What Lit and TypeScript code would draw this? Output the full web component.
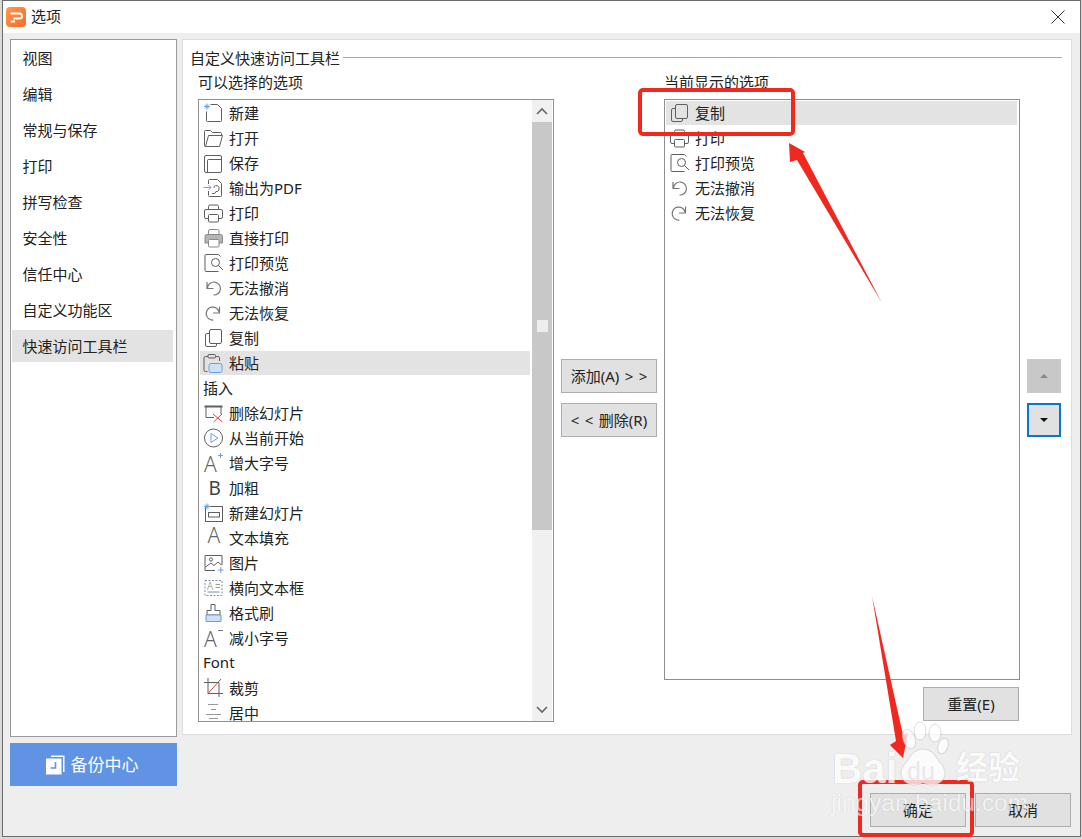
import { LitElement, html, svg, css } from "lit";
import { customElement } from "lit/decorators.js";

// 20x20 toolbar glyphs, traced from the dialog
const icons: Record<string, unknown> = {
  new: svg`<path d="M7.5 1.5H14.5L18.5 5.5V17.5Q18.5 18.5 17.5 18.5H4.5Q3.5 18.5 3.5 17.5V8.5"/><path class="b" d="M4 .5V6.5M1 3.5H7M2 1.5L6 5.5M6 1.5L2 5.5"/>`,
  open: svg`<path d="M2.5 18.5Q1.5 18.5 1.5 17.5V3.5Q1.5 2.5 2.5 2.5H7.5L9.5 4.5H17.5Q18.5 4.5 18.5 5.5V7.5"/><path d="M2.5 18.5H16.5L19.5 7.5H5.5L2.5 18.5Z"/>`,
  save: svg`<rect x="1.5" y="2.5" width="17" height="17" rx="1.5"/><path d="M4.5 19V7.5Q4.5 6.5 5.5 6.5H18"/>`,
  pdf: svg`<path d="M5.5 6V2.5Q5.5 1.5 6.5 1.5H14.5L18.5 5.5V17.5Q18.5 18.5 17.5 18.5H6.5Q5.5 18.5 5.5 17.5V13"/><path d="M9 15.5H11Q12.5 15.5 13 13.5H14.5Q16.5 12.5 16 9.5Q15 7 12.5 7.5Q11 8 11 10"/><path class="b" d="M.5 9.5H8M5.5 7L8 9.5L5.5 12"/>`,
  print: svg`<path d="M5.5 6.5V3.5Q5.5 2 7 2H14Q15.5 2 15.5 3.5V6.5"/><path d="M5.5 15.5H3Q1.5 15.5 1.5 14V8Q1.5 6.5 3 6.5H18Q19.5 6.5 19.5 8V14Q19.5 15.5 18 15.5H15.5"/><rect x="5.5" y="11.5" width="10" height="7.5" rx="1"/>`,
  direct: svg`<g stroke="#8a8a8a"><path d="M5.5 6.5V3Q5.5 1.5 7 1.5H14.5Q16 1.5 16 3V6.5"/><path d="M2 8.5Q2 6.5 4 6.5H17.5Q19.5 6.5 19.5 8.5V15H2Z" fill="#b5b5b5"/><rect x="5.5" y="11.5" width="10.5" height="7.5" rx="1" fill="#fff"/></g>`,
  preview: svg`<path d="M15.5 18.5H3Q2 18.5 2 17.5V2.5Q2 1.5 3 1.5H15.5L17.5 3.5"/><circle cx="12.5" cy="9.5" r="4"/><path d="M15.5 12.5L20 17"/>`,
  undo: svg`<path class="u" d="M4 4V10.5H10.5M4.5 10A6.5 6.5 0 1 1 10.5 17"/>`,
  redo: svg`<path class="u" d="M16.5 3.5V10H10M16 9A6.5 6.5 0 1 0 10.5 17"/>`,
  copy: svg`<rect x="6.5" y="1.5" width="12" height="14" rx="1.5"/><path d="M6.5 5.5H4Q2.5 5.5 2.5 7V17Q2.5 18.5 4 18.5H12Q13.5 18.5 13.5 17V15.5"/>`,
  paste: svg`<path d="M4.5 18.5H2.5Q1 18.5 1 17V5Q1 3.5 2.5 3.5H15Q16.5 3.5 16.5 5V8"/><rect x="5" y="1.5" width="7.5" height="3.5" rx="1" fill="#ddd"/><rect class="b" fill="#cfe0f5" x="6" y="10.5" width="13" height="9" rx="2"/>`,
  delslide: svg`<path d="M1.5 3.5H19.5" stroke-width="2"/><path d="M3 3.5V14.5H11"/><path d="M12 3.5H18V11"/><path stroke="#e0403a" d="M10 11L19.5 19M19 11L10.5 19"/>`,
  play: svg`<circle cx="10.5" cy="10" r="9"/><path class="b" d="M8 5.5V14.5L15 10Z"/>`,
  grow: svg`<text x="1" y="19" class="gl">A</text><path class="b" d="M15 2.5H20M17.5 0V5"/>`,
  bold: svg`<text x="5.5" y="16.5" class="gl bd">B</text>`,
  newslide: svg`<rect x="2.5" y="3.5" width="17" height="15"/><rect x="5.5" y="9.5" width="11" height="4.5"/><path class="b" d="M4 .5V6.5M1 3.5H7M2 1.5L6 5.5M6 1.5L2 5.5"/>`,
  fill: svg`<text x="4.5" y="15" class="gl">A</text>`,
  picture: svg`<path d="M12 17.5H2V2.5H19V12"/><circle cx="8" cy="6.5" r="1.6"/><path d="M2.5 14L8 10L11 12.5L15 9L18.5 12"/><path class="b" d="M15 17H20.5M17.8 14.2V20"/>`,
  textbox: svg`<rect x="2" y="2.5" width="17" height="15" stroke-dasharray="2 1.5" stroke="#7a8ea8"/><text x="4" y="12" class="gl sm">A</text><path stroke="#999" d="M12.5 6.5H17M12.5 9.5H17"/><path stroke="#7a8ea8" d="M4.5 14H16.5"/>`,
  brush: svg`<path d="M8 1.5H12V7.5H17V12H4V7.5H8Z"/><path class="b" fill="#cfe0f5" d="M3 12H18V18.5H3Z"/>`,
  shrink: svg`<text x="1" y="19" class="gl">A</text><path stroke="#777" d="M15 2.5H20"/>`,
  crop: svg`<path d="M5 0V15.5H20M1 4.5H16V19"/><path stroke="#e0403a" d="M5 15.5L18 1"/>`,
  center: svg`<path stroke="#999" d="M5 1.5H15M8 6.5H13M3 11.5H18M6 15.5H15"/><path stroke="#888" stroke-width="1.5" d="M2 19H19"/>`,
};

type Row = { label: string; icon?: string; selected?: boolean };

const available: Row[] = [
  { label: "新建", icon: "new" },
  { label: "打开", icon: "open" },
  { label: "保存", icon: "save" },
  { label: "输出为PDF", icon: "pdf" },
  { label: "打印", icon: "print" },
  { label: "直接打印", icon: "direct" },
  { label: "打印预览", icon: "preview" },
  { label: "无法撤消", icon: "undo" },
  { label: "无法恢复", icon: "redo" },
  { label: "复制", icon: "copy" },
  { label: "粘贴", icon: "paste", selected: true },
  { label: "插入" },
  { label: "删除幻灯片", icon: "delslide" },
  { label: "从当前开始", icon: "play" },
  { label: "增大字号", icon: "grow" },
  { label: "加粗", icon: "bold" },
  { label: "新建幻灯片", icon: "newslide" },
  { label: "文本填充", icon: "fill" },
  { label: "图片", icon: "picture" },
  { label: "横向文本框", icon: "textbox" },
  { label: "格式刷", icon: "brush" },
  { label: "减小字号", icon: "shrink" },
  { label: "Font" },
  { label: "裁剪", icon: "crop" },
  { label: "居中", icon: "center" },
];

const current: Row[] = [
  { label: "复制", icon: "copy", selected: true },
  { label: "打印", icon: "print" },
  { label: "打印预览", icon: "preview" },
  { label: "无法撤消", icon: "undo" },
  { label: "无法恢复", icon: "redo" },
];

const navItems = ["视图", "编辑", "常规与保存", "打印", "拼写检查", "安全性", "信任中心", "自定义功能区", "快速访问工具栏"];

@customElement("app-root")
export class AppRoot extends LitElement {
  static styles = css`
    :host {
      display: block;
      width: 1082px;
      height: 839px;
      position: relative;
      overflow: hidden;
      background: #d9d9d9;
      font-family: "Noto Sans", "Noto Sans CJK SC", sans-serif;
      font-size: 15px;
      color: #222;
      box-sizing: border-box;
      padding: 0 1px 2px 2px;
    }
    * {
      box-sizing: border-box;
    }
    .window {
      height: 100%;
      border: 1px solid #6b6b6b;
      display: flex;
      flex-direction: column;
      background: #eeeeee;
    }
    .titlebar {
      height: 32px;
      background: #fff;
      display: flex;
      align-items: center;
      padding: 0 14px 0 3px;
      gap: 5px;
      flex: none;
    }
    .logo {
      width: 20px;
      height: 20px;
      display: block;
    }
    .title {
      flex: 1;
      padding-bottom: 3px;
    }
    .close {
      width: 16px;
      height: 16px;
      display: block;
    }
    .body {
      flex: 1;
      display: flex;
      gap: 5px;
      padding: 6px 6px 0 7px;
    }
    .side {
      width: 167px;
      display: flex;
      flex-direction: column;
      gap: 6px;
    }
    .nav {
      height: 698px;
      border: 1px solid #9a9a9a;
      background: #fff;
      padding: 2px 3px 0 1px;
      display: flex;
      flex-direction: column;
      gap: 4px;
    }
    .nav-item {
      height: 32px;
      line-height: 32px;
      padding-left: 10.5px;
    }
    .nav-item.on {
      background: #e3e3e3;
    }
    .backup {
      height: 43px;
      background: #6193e4;
      color: #fff;
      font-size: 17px;
      display: flex;
      align-items: center;
      justify-content: center;
      gap: 6px;
      padding-right: 4px;
    }
    .backup span {
      padding-bottom: 3px;
    }
    .backup svg {
      width: 20px;
      height: 20px;
      display: block;
    }
    .main {
      width: 890px;
      display: flex;
      flex-direction: column;
    }
    .panel {
      height: 696px;
      background: #fff;
      border: 1px solid #dcdcdc;
      padding: 8px 9px 0 7px;
    }
    .heading {
      height: 20px;
      line-height: 18px;
      display: flex;
      align-items: center;
      gap: 3px;
    }
    .heading i {
      flex: 1;
      border-top: 1px solid #a8a8a8;
      margin-top: -1px;
    }
    .columns {
      display: flex;
      gap: 7px;
      padding: 5px 0 0 8px;
    }
    .col {
      width: 356px;
      display: flex;
      flex-direction: column;
    }
    .col.right {
      align-items: flex-end;
    }
    .col-label {
      height: 20px;
      line-height: 18px;
      margin-bottom: 6px;
      align-self: flex-start;
    }
    .list {
      border: 1px solid #8f8f8f;
      background: #fff;
      display: flex;
      overflow: hidden;
      width: 100%;
    }
    .list.long {
      height: 623px;
    }
    .list.short {
      height: 581px;
    }
    .rows {
      flex: 1;
      padding: 1px 2px 0 1px;
      display: flex;
      flex-direction: column;
      gap: 1px;
      min-width: 0;
    }
    .row {
      height: 24px;
      flex: none;
      display: flex;
      align-items: center;
      gap: 6px;
      padding-left: 3px;
      white-space: nowrap;
    }
    .row span {
      padding-bottom: 2px;
    }
    .row.on {
      background: #e3e3e3;
    }
    .row svg {
      width: 20px;
      height: 20px;
      flex: none;
      fill: none;
      stroke: #5f5f5f;
      stroke-width: 1;
      overflow: visible;
    }
    .row svg .b {
      stroke: #6f9fd8;
    }
    .row svg .u {
      stroke: #777;
      stroke-width: 1.2;
    }
    .row svg .gl {
      font: 300 21px "Noto Sans", sans-serif;
      fill: #666;
      stroke: none;
    }
    .row svg .gl.bd {
      font: 400 19px "Noto Sans", sans-serif;
      fill: #444;
    }
    .row svg .gl.sm {
      font-size: 10px;
      fill: #777;
    }
    .scrollbar {
      width: 20px;
      margin-right: 1px;
      background: #f0f0f0;
      display: flex;
      flex-direction: column;
      flex: none;
    }
    .sb-end {
      height: 22px;
      flex: none;
      display: flex;
      align-items: center;
      justify-content: center;
    }
    .sb-end svg {
      width: 12px;
      height: 8px;
      fill: none;
      stroke: #666;
      stroke-width: 1.6;
    }
    .thumb {
      height: 408px;
      flex: none;
      background: #c8c8c8;
      display: flex;
      justify-content: center;
      padding-top: 198px;
    }
    .thumb i {
      width: 11px;
      height: 12px;
      background: #eeeeee;
    }
    .track {
      flex: 1;
    }
    button {
      font: inherit;
      color: #222;
      width: 96px;
      height: 34px;
      background: #e1e1e1;
      border: 1px solid #adadad;
      padding: 0 0 2px;
      white-space: pre;
      word-spacing: 1.5px;
    }
    .middle {
      width: 96px;
      display: flex;
      flex-direction: column;
      gap: 10px;
      padding-top: 286px;
    }
    .updown {
      width: 34px;
      display: flex;
      flex-direction: column;
      gap: 10px;
      padding-top: 286px;
    }
    .updown button {
      width: 34px;
      padding: 0;
      display: flex;
      align-items: center;
      justify-content: center;
    }
    .updown button.off {
      background: #c8c8c8;
      border-color: #c8c8c8;
    }
    .updown button.focus {
      border: 2px solid #0a78c8;
    }
    .tri {
      width: 8px;
      height: 4px;
      display: block;
    }
    .reset {
      margin-top: 7px;
      margin-right: 1px;
    }
    .footer {
      display: flex;
      justify-content: flex-end;
      gap: 9px;
      padding: 58px 1px 0 0;
    }
    .mark-box {
      position: absolute;
      border: 4px solid #f0281e;
      border-radius: 5px;
    }
    .mark-copy {
      left: 638px;
      top: 88px;
      width: 157px;
      height: 48px;
    }
    .mark-ok {
      left: 858px;
      top: 780px;
      width: 116px;
      height: 57px;
    }
    .overlay {
      position: absolute;
      left: 0;
      top: 0;
      width: 1082px;
      height: 839px;
      pointer-events: none;
    }
    .wm {
      position: absolute;
      color: #fff;
      opacity: 0.75;
      text-shadow: 0 0 1px #aaa;
      font-family: "Liberation Sans", "Noto Sans CJK SC", sans-serif;
      white-space: nowrap;
      line-height: 1;
    }
    .wm-bai {
      left: 832px;
      top: 748px;
      font-size: 42px;
      font-weight: 700;
    }
    .wm-du {
      left: 907px;
      top: 759px;
      font-size: 25px;
      color: #e4e4e4;
      text-shadow: none;
    }
    .wm-jy {
      left: 956px;
      top: 752px;
      font-size: 32px;
      font-weight: 700;
    }
    .wm-url {
      left: 831px;
      top: 791px;
      font-size: 24px;
      letter-spacing: 0.2px;
      opacity: 0.6;
    }
  `;

  renderRow(r: Row) {
    return html`<div class="row ${r.selected ? "on" : ""}">
      ${r.icon ? html`<svg viewBox="0 0 20 20">${icons[r.icon]}</svg>` : ""}
      <span>${r.label}</span>
    </div>`;
  }

  render() {
    return html`
      <div class="window">
        <div class="titlebar">
          <svg class="logo" viewBox="0 0 20 20">
            <defs>
              <linearGradient id="lg" x1="0" y1="0" x2="1" y2="1">
                <stop offset="0" stop-color="#ff9a4a" />
                <stop offset="1" stop-color="#f56a2a" />
              </linearGradient>
            </defs>
            <rect width="20" height="20" rx="4" fill="url(#lg)" />
            <path d="M4.5 6.5H13.5Q16 6.5 16 9Q16 11.5 13.5 11.5H7.5M4.5 14.5H9" fill="none" stroke="#fff" stroke-width="2" />
          </svg>
          <span class="title">选项</span>
          <svg class="close" viewBox="0 0 16 16">
            <path d="M1.5 1.5L14.5 14.5M14.5 1.5L1.5 14.5" stroke="#333" stroke-width="1" fill="none" />
          </svg>
        </div>
        <div class="body">
          <div class="side">
            <div class="nav">
              ${navItems.map(
                (n, i) => html`<div class="nav-item ${i === navItems.length - 1 ? "on" : ""}">${n}</div>`
              )}
            </div>
            <div class="backup">
              <svg viewBox="0 0 20 20">
                <path d="M6 .5H19.5V17H18V2H6Z" fill="#fff" />
                <path d="M1 3.5H16.5V19.5H1Z" fill="#fff" />
                <path d="M10.5 7V13H5.5" fill="none" stroke="#6193e4" stroke-width="1.6" />
              </svg>
              <span>备份中心</span>
            </div>
          </div>
          <div class="main">
            <div class="panel">
              <div class="heading"><span>自定义快速访问工具栏</span><i></i></div>
              <div class="columns">
                <div class="col">
                  <div class="col-label">可以选择的选项</div>
                  <div class="list long">
                    <div class="rows">${available.map((r) => this.renderRow(r))}</div>
                    <div class="scrollbar">
                      <div class="sb-end">
                        <svg viewBox="0 0 12 8"><path d="M1 7L6 2L11 7" /></svg>
                      </div>
                      <div class="thumb"><i></i></div>
                      <div class="track"></div>
                      <div class="sb-end">
                        <svg viewBox="0 0 12 8"><path d="M1 1L6 6L11 1" /></svg>
                      </div>
                    </div>
                  </div>
                </div>
                <div class="middle">
                  <button>添加(A) &gt; &gt;</button>
                  <button>&lt; &lt; 删除(R)</button>
                </div>
                <div class="col right">
                  <div class="col-label">当前显示的选项</div>
                  <div class="list short">
                    <div class="rows">${current.map((r) => this.renderRow(r))}</div>
                  </div>
                  <button class="reset">重置(E)</button>
                </div>
                <div class="updown">
                  <button class="off" aria-label="上移">
                    <svg class="tri" viewBox="0 0 10 5"><path d="M5 0L10 5H0Z" fill="#8a8a8a" /></svg>
                  </button>
                  <button class="focus" aria-label="下移">
                    <svg class="tri" viewBox="0 0 10 5"><path d="M0 0H10L5 5Z" fill="#111" /></svg>
                  </button>
                </div>
              </div>
            </div>
            <div class="footer">
              <button>确定</button>
              <button>取消</button>
            </div>
          </div>
        </div>
      </div>

      <div class="mark-box mark-copy"></div>
      <div class="mark-box mark-ok"></div>
      <svg class="overlay" viewBox="0 0 1082 839">
        <path d="M789 143L805 152L803 153L882 303L797 160L790 162Z" fill="#f0281e" />
        <path d="M872 596L903 735L908 733L903 758L890 745L896 741Z" fill="#f0281e" />
        <g fill="#fff" fill-opacity=".75" stroke="#bbb" stroke-opacity=".5">
          <ellipse cx="909" cy="739" rx="6" ry="10" transform="rotate(-20 909 739)" />
          <ellipse cx="920" cy="731" rx="6" ry="9" />
          <ellipse cx="935" cy="733" rx="6" ry="9" />
          <ellipse cx="943" cy="746" rx="5" ry="8" transform="rotate(20 943 746)" />
          <path d="M923 749Q932 749 938 760Q950 772 942 781Q934 788 923 783Q912 788 904 781Q896 772 908 760Q914 749 923 749Z" />
        </g>
      </svg>
      <span class="wm wm-bai">Bai</span>
      <span class="wm wm-du">du</span>
      <span class="wm wm-jy">经验</span>
      <span class="wm wm-url">jingyan.baidu.com</span>
    `;
  }
}
